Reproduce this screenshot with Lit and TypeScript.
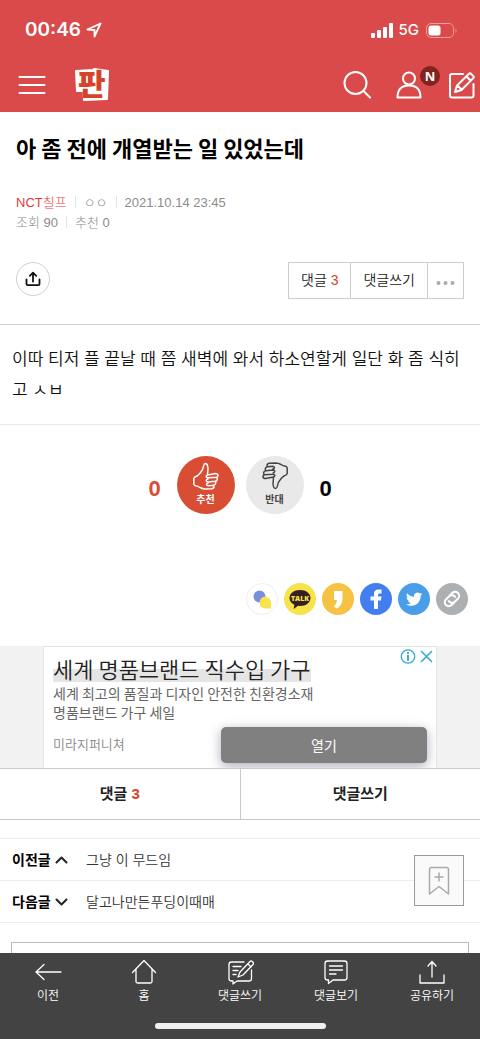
import { LitElement, html, css, svg } from "lit";
import { customElement } from "lit/decorators.js";

const arrowBack = svg`<path d="M27 14H2M10 6.5 2 14l8 7.5"/>`;
const house = svg`<path d="M2.5 14.5 14 2.5l11.500 12M6 11.500V23.500q0 1.500 1.500 1.500h13q1.500 0 1.500-1.500v-12"/>`;
const writeBubble = svg`<path d="M18 4H5.500Q3 4 3 6.500v14Q3 23 5.500 23H7v3l4-3h12q2.500 0 2.500-2.500V12M7 8.500h8M7 12.500h5M7 16.500h3"/><path d="m12 19 2-5L24 3.500q1-1 2.200 0l.8.8q1 1 0 2.200L17 17l-5 2ZM22 6l3 3"/>`;
const bubble = svg`<path d="M5.500 3h17Q25 3 25 5.500v14q0 2.500-2.500 2.500H11l-4.500 3.500V22h-1Q3 22 3 19.500v-14Q3 3 5.500 3ZM7.500 8h13M7.500 12h13M7.500 16H14"/>`;
const shareTray = svg`<path d="M2 17v8h24v-8M14 19V3.500M10 8l4-4.500L18 8"/>`;

const tools = [
  { label: "이전", icon: arrowBack },
  { label: "홈", icon: house },
  { label: "댓글쓰기", icon: writeBubble },
  { label: "댓글보기", icon: bubble },
  { label: "공유하기", icon: shareTray },
];

const thumb = svg`<path d="M15.500 12 16 5Q15.500.5 13.500.5 12 .6 11.600 3q-.6 4-3 6.500-2 2.500-4 3.800Q2 14 1.800 15.500v5.500Q2 22.500 3.500 22.700q2.500.3 4.500 1.800 2.500 1.500 5.500 1.500l6-.3q2.500-.3 2.500-2 0-1-.7-1.500 2.400-.5 2.500-2.200 0-1.100-.6-1.700 2.100-.4 2.200-2.200 0-1.200-.8-1.800 1.400-.6 1.400-1.900-.2-2-2.700-2l-6.500 1.300q-2.500.3-2.700 1.600.2 1.500 2 1.400l8.500-.4M23.200 18.300l-7 .7q-1.800 0-2-1.300.1-1.300 1.700-1.600M21.300 22.200l-4.800.5q-1.900 0-1.900-1.300.1-1.300 1.600-1.500"/>`;

const shares = [
  {
    name: "네이트온",
    bg: "#fff",
    art: svg`<circle cx="16" cy="16" r="15.500" fill="#fff" stroke="#eee"/><circle cx="13.500" cy="13.500" r="6" fill="#788fe0"/><path d="M19.500 13.500a6 6 0 1 0 0 12H25v-6a6 6 0 0 0-5.500-6Z" fill="#f9e34c"/>`,
  },
  {
    name: "카카오톡",
    bg: "#f7e34b",
    art: svg`<path d="M16 7C10 7 5.500 10.400 5.500 15c0 3 2 5.400 4.800 6.700L9.700 26l4.300-3.200 2 .2c6 0 10.500-3.400 10.500-8S22 7 16 7Z" fill="#37201f"/><text x="16" y="17.500" class="talk" text-anchor="middle">TALK</text>`,
  },
  {
    name: "카카오스토리",
    bg: "#f6c244",
    art: svg`<path d="M12 8h8.500v8.500q-.5 6-5.500 9l-3-2q3-3 3-6.500h-3Z" fill="#fff"/>`,
  },
  {
    name: "페이스북",
    bg: "#427ef0",
    art: svg`<path d="M14 26V17.500h-3.500V13.500H14V11q0-4.500 4.500-4.500h3v4h-2q-1.500 0-1.500 1.500v1.500h3.500l-.6 4H18V26Z" fill="#fff"/>`,
  },
  {
    name: "트위터",
    bg: "#4a9ee9",
    art: svg`<path transform="translate(8 8) scale(.68)" d="M23.950 4.570a10 10 0 0 1-2.820.77 4.960 4.960 0 0 0 2.160-2.720c-.95.56-2 .96-3.130 1.190a4.920 4.920 0 0 0-8.380 4.480C7.690 8.090 4.070 6.130 1.640 3.160a4.920 4.920 0 0 0 1.520 6.570 4.900 4.900 0 0 1-2.230-.62v.06a4.920 4.920 0 0 0 3.950 4.830 5 5 0 0 1-2.210.08 4.940 4.940 0 0 0 4.600 3.420A9.870 9.870 0 0 1 0 19.540a13.990 13.990 0 0 0 7.560 2.210c9.050 0 14-7.500 14-13.980 0-.21 0-.42-.02-.63a9.940 9.940 0 0 0 2.410-2.570Z" fill="#fff"/>`,
  },
  {
    name: "주소 복사",
    bg: "#acb0b3",
    art: svg`<g transform="rotate(-45 16 16)" fill="none" stroke="#fff" stroke-width="2"><path d="M15 20h-3.500a4 4 0 0 1 0-8H16a4 4 0 0 1 3.500 5.500"/><path d="M17 12h3.500a4 4 0 0 1 0 8H16a4 4 0 0 1-3.500-5.500"/></g>`,
  },
];

@customElement("app-root")
export class AppRoot extends LitElement {
  static styles = css`
    :host {
      display: block;
      min-height: 100vh;
      background: #fff;
      color: #222;
      font-family: "Liberation Sans", "Noto Sans CJK KR", sans-serif;
      font-size: 14px;
      line-height: 20px;
    }
    * { box-sizing: border-box; }
    button {
      font: inherit;
      color: inherit;
      background: none;
      border: 0;
      margin: 0;
      padding: 0;
    }
    a { color: inherit; text-decoration: none; }
    svg { display: block; flex: none; }
    .line {
      fill: none;
      stroke: currentColor;
      stroke-linecap: round;
      stroke-linejoin: round;
    }

    .top { background: #db4a4a; color: #fff; }
    .status {
      display: flex;
      align-items: center;
      height: 60px;
      padding: 0 23px 0 25px;
      font-family: Inter, sans-serif;
    }
    .time { font-size: 19px; font-weight: 600; margin-right: 5px; }
    .signal { margin-left: auto; }
    .net { font-size: 15px; font-weight: 500; margin: 0 7px 0 6px; }
    .bar {
      display: flex;
      align-items: center;
      height: 52px;
      padding: 0 4px 2px 18px;
    }
    .logo { margin-left: 26px; }
    .logo svg { overflow: visible; }
    .logo text {
      font-family: "Noto Sans CJK KR", sans-serif;
      font-weight: 900;
      font-size: 30px;
      fill: #d5432b;
    }
    .search { margin-left: auto; margin-right: 25px; }
    .user { position: relative; margin-right: 26px; }
    .new {
      position: absolute;
      left: 24px;
      top: -5px;
      width: 20px;
      height: 20px;
      border-radius: 50%;
      background: #83221f;
      font: 700 13px/20px "Open Sans", sans-serif;
      text-align: center;
    }

    .head { padding: 19px 16px 25px; border-bottom: 1px solid #d2d2d2; }
    h1 {
      margin: 0;
      font-family: "Noto Sans CJK KR", sans-serif;
      font-size: 22px;
      line-height: 32px;
      font-weight: 700;
      color: #000;
    }
    .meta { margin-top: 30px; color: #8c8c8c; font-size: 13px; font-weight: 300; }
    .meta div { display: flex; align-items: center; }
    .meta span + span::before {
      content: "";
      display: inline-block;
      width: 1px;
      height: 12px;
      margin: 0 8px;
      background: #e4e4e4;
      vertical-align: -1px;
    }
    .meta .cat { color: #e03c37; }
    .actions {
      display: flex;
      align-items: flex-start;
      justify-content: space-between;
      margin-top: 29px;
    }
    .round {
      display: grid;
      place-items: center;
      width: 34px;
      height: 34px;
      border: 1px solid #d0d0d0;
      border-radius: 50%;
      color: #111;
    }
    .group { display: flex; border: 1px solid #ccc; height: 37px; }
    .group button { padding: 0 12px 2px; font-weight: 350; }
    .group button + button { border-left: 1px solid #ccc; }
    .group .more { padding: 4px 8px 0; }
    .red { color: #dc402c; }

    .body {
      margin: 0;
      padding: 19px 20px 18px 12px;
      font-size: 17px;
      line-height: 31px;
      font-weight: 350;
      color: #111;
      border-bottom: 1px solid #e8e8e8;
    }
    .vote {
      display: flex;
      justify-content: center;
      align-items: center;
      gap: 12px;
      padding-top: 31px;
    }
    .count { width: 20px; padding-top: 8px; font-size: 22px; font-weight: 700; text-align: center; color: #000; }
    .count.up { color: #d94d34; }
    .thumb {
      display: flex;
      flex-direction: column;
      align-items: center;
      width: 58px;
      height: 58px;
      padding-top: 4px;
      border-radius: 50%;
      background: #e9e9e9;
      font-size: 10px;
      line-height: 16px;
      font-weight: 700;
      color: #444;
    }
    .thumb.up { background: #d94d34; color: #fff; }
    .thumb svg { margin-bottom: 2px; }
    .votes { display: flex; gap: 11px; }
    .share {
      display: flex;
      justify-content: flex-end;
      gap: 6px;
      padding: 69px 12px 31px;
    }
    .share button { width: 32px; height: 32px; border-radius: 50%; }
    .talk { font: 800 7px "Open Sans", sans-serif; fill: #f7e34b; }

    .ad {
      display: flex;
      justify-content: center;
      background: #f2f2f2;
      font-family: "Noto Sans CJK KR", sans-serif;
    }
    .card {
      position: relative;
      flex: 0 1 394px;
      height: 122px;
      padding: 8px 9px 0;
      border: 1px solid #e6e6e6;
      border-bottom: 0;
      background: #fff;
      overflow: hidden;
      color: #666;
      line-height: 19px;
    }
    .card strong {
      display: inline-block;
      font-size: 22px;
      line-height: 27px;
      font-weight: 350;
      color: #222;
      background: linear-gradient(transparent 50%, #e5e5e5 50%);
    }
    .card p { margin: 2px 0 0; }
    .foot { display: flex; align-items: center; justify-content: space-between; margin-top: 5px; }
    .brand { font-size: 13px; font-weight: 350; padding-bottom: 4px; color: #888; }
    .open {
      width: 206px;
      height: 36px;
      border-radius: 5px;
      background: #808080;
      color: #fff;
      font-size: 14px;
      box-shadow: 0 3px 12px rgba(40, 45, 80, 0.4);
    }
    .marks { position: absolute; right: 2px; top: 1px; color: #35a9cf; }

    .tabs { display: flex; border: solid #c9c9c9; border-width: 1px 0; }
    .tabs a {
      flex: 1;
      padding: 15px 0;
      font-size: 15px;
      font-weight: 700;
      text-align: center;
    }
    .tabs a + a { border-left: 1px solid #c9c9c9; }
    .near { position: relative; margin-top: 18px; border-top: 1px solid #ececec; }
    .near a {
      display: flex;
      align-items: center;
      height: 42px;
      padding: 0 12px;
      border-bottom: 1px solid #ececec;
    }
    .near b { color: #000; width: 43px; }
    .near span { margin-left: 18px; font-weight: 350; color: #333; }
    .mark {
      position: absolute;
      right: 16px;
      top: 16px;
      display: grid;
      place-items: center;
      width: 50px;
      height: 51px;
      border: 1px solid #999;
      background: rgba(250, 250, 250, 0.95);
      color: #aaa;
    }
    .write { padding: 19px 11px 0; }
    textarea {
      display: block;
      width: 100%;
      height: 60px;
      border: 1px solid #bbb;
      border-radius: 0;
      resize: none;
      font: inherit;
    }

    .dock {
      position: fixed;
      inset: auto 0 0;
      background: #434343;
      color: #fff;
      padding: 5px 0 10px;
    }
    .tools { display: grid; grid-template-columns: repeat(5, 1fr); }
    .tools button {
      display: flex;
      flex-direction: column;
      align-items: center;
      font-size: 12px;
      line-height: 18px;
      font-weight: 350;
    }
    .tools svg { margin-bottom: 1px; }
    .home { width: 171px; height: 6px; margin: 18px auto 0; border-radius: 3px; background: #f2f0f0; }
  `;

  render() {
    return html`
      <header class="top">
        <div class="status">
          <span class="time">00:46</span>
          <svg class="line" width="16" height="16" stroke-width="1.8"><path d="m1.500 7.500 13-6-6 13v-6.500Z"/></svg>
          <svg class="signal" width="22" height="15" fill="#fff"><rect y="10" width="4" height="5" rx="1"/><rect x="6" y="7" width="4" height="8" rx="1"/><rect x="12" y="4" width="4" height="11" rx="1"/><rect x="18" width="4" height="15" rx="1"/></svg>
          <span class="net">5G</span>
          <svg width="31" height="15"><rect x=".5" y=".5" width="27" height="14" rx="4.500" fill="none" stroke="#eb9c9c"/><rect x="2.500" y="2.500" width="12" height="10" rx="2.500" fill="#fff"/><path d="M29.500 5v5q2-2.500 0-5" fill="#eb9c9c"/></svg>
        </div>
        <div class="bar">
          <button aria-label="메뉴"><svg class="line" width="28" height="20" stroke-width="2"><path d="M1.500 2h25M1.500 10h25M1.500 18h25"/></svg></button>
          <a class="logo" href="#" aria-label="판"><svg width="40" height="36"><path fill="#fff" stroke="#fff" stroke-width="2" stroke-linejoin="round" d="m4 4 17-1 1-1 14 2-1 28-23 1-.500-9L5 24Z"/><text x="6" y="28">판</text></svg></a>
          <button class="search" aria-label="검색"><svg class="line" width="28" height="28" stroke-width="2"><circle cx="12.500" cy="12" r="11"/><path d="m20.500 20 6.500 6.500"/></svg></button>
          <button class="user" aria-label="내 정보"><svg class="line" width="26" height="28" stroke-width="2"><circle cx="13" cy="7.500" r="6"/><path d="M1.500 26.500Q1.500 14.500 13 14.500t11.500 12Z"/></svg><span class="new">N</span></button>
          <button aria-label="글쓰기"><svg class="line" width="28" height="28" stroke-width="2"><path d="M15 3H4Q2 3 2 5v19.500q0 2 2 2h19.500q2 0 2-2V13"/><path d="m7 21 2-6.500L21 2.800q1-1 2 0l2.300 2.300q1 1 0 2L13.500 19 7 21ZM18.500 5.500l4.300 4.300M9.500 14.500l4 4"/></svg></button>
        </div>
      </header>

      <main>
        <section class="head">
          <h1>아 좀 전에 개열받는 일 있었는데</h1>
          <div class="meta">
            <div><span class="cat">NCT칠프</span><span>ㅇㅇ</span><span>2021.10.14 23:45</span></div>
            <div><span>조회 90</span><span>추천 0</span></div>
          </div>
          <div class="actions">
            <button class="round" aria-label="공유"><svg class="line" width="16" height="16" stroke-width="1.800"><path d="M1.500 8.500v4.500q0 1.200 1.200 1.200h10.600q1.200 0 1.200-1.200V8.500M8 10.500V1.800M4.800 4.800 8 1.600l3.200 3.200"/></svg></button>
            <div class="group">
              <button>댓글 <span class="red">3</span></button>
              <button>댓글쓰기</button>
              <button class="more" aria-label="더보기"><svg width="19" height="4" fill="#aaa"><circle cx="2.500" cy="2" r="2"/><circle cx="9.500" cy="2" r="2"/><circle cx="16.500" cy="2" r="2"/></svg></button>
            </div>
          </div>
        </section>

        <p class="body">이따 티저 플 끝날 때 쯤 새벽에 와서 하소연할게 일단 화 좀 식히고 ㅅㅂ</p>

        <section class="vote">
          <span class="count up">0</span>
          <div class="votes">
            <button class="thumb up"><svg class="line" width="28" height="30" stroke-width="1.500" viewBox="0 -3 28 30">${thumb}</svg>추천</button>
            <button class="thumb"><svg class="line" width="28" height="30" stroke-width="1.500" viewBox="0 -3 28 30"><g transform="rotate(180 14 13)">${thumb}</g></svg>반대</button>
          </div>
          <span class="count">0</span>
        </section>

        <section class="share">
          ${shares.map((s) => html`<button aria-label=${s.name}><svg width="32" height="32"><circle cx="16" cy="16" r="16" fill=${s.bg} />${s.art}</svg></button>`)}
        </section>

        <aside class="ad">
          <div class="card">
            <strong>세계 명품브랜드 직수입 가구</strong>
            <p>세계 최고의 품질과 디자인 안전한 친환경소재<br />명품브랜드 가구 세일</p>
            <div class="foot"><span class="brand">미라지퍼니쳐</span><button class="open">열기</button></div>
            <svg class="marks line" width="34" height="17" stroke-width="1.300"><circle cx="8" cy="8.500" r="6.700"/><path d="M8 7.500v4.500M8 4.800v.2" stroke-width="2"/><path d="m21.500 3.500 10 10m0-10-10 10" stroke-width="1.600"/></svg>
          </div>
        </aside>

        <nav class="tabs"><a href="#">댓글 <span class="red">3</span></a><a href="#">댓글쓰기</a></nav>

        <nav class="near">
          <a href="#"><b>이전글</b><svg class="line" width="13" height="8" stroke-width="2"><path d="m1.500 6.500 5-5 5 5"/></svg><span>그냥 이 무드임</span></a>
          <a href="#"><b>다음글</b><svg class="line" width="13" height="8" stroke-width="2"><path d="m1.500 1.500 5 5 5-5"/></svg><span>달고나만든푸딩이때매</span></a>
          <button class="mark" aria-label="책갈피"><svg class="line" width="22" height="30" stroke-width="1.500"><path d="M1.500 28V3.500q0-2 2-2h15q2 0 2 2V28L11 20.500ZM11 7v8M7 11h8"/></svg></button>
        </nav>

        <div class="write"><textarea aria-label="댓글 입력"></textarea></div>
      </main>

      <footer class="dock">
        <nav class="tools">
          ${tools.map((t) => html`<button><svg class="line" width="28" height="28" stroke-width="1.300">${t.icon}</svg>${t.label}</button>`)}
        </nav>
        <div class="home"></div>
      </footer>
    `;
  }
}
